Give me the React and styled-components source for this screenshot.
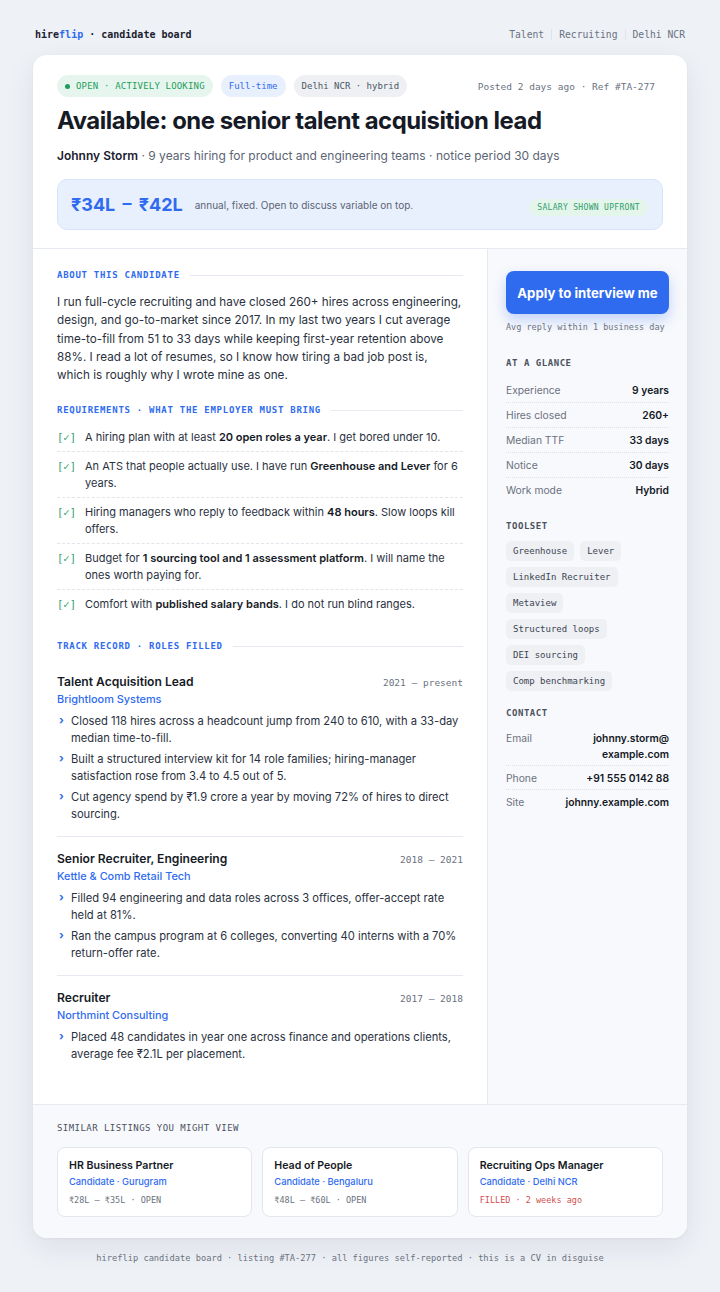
import React from 'react';
import styled, { createGlobalStyle } from 'styled-components';

const sans = `Inter, "Noto Sans", "Liberation Sans", sans-serif`;
const mono = `"DejaVu Sans Mono", "Liberation Mono", monospace`;

const GlobalStyle = createGlobalStyle`
  html, body {
    margin: 0;
    padding: 0;
    background: #eef1f6;
  }
  body {
    font-family: ${sans};
    color: #1b2130;
    -webkit-font-smoothing: antialiased;
  }
  * { box-sizing: border-box; }
`;

const Page = styled.div`
  padding: 24px 33px 24px;
  min-height: 1292px;
`;

const TopBar = styled.header`
  display: flex;
  justify-content: space-between;
  align-items: center;
  height: 20px;
  margin-bottom: 11px;
  padding: 0 2px;
  font-family: ${mono};
  font-size: 10px;
`;

const Brand = styled.div`
  color: #1b2130;
  font-weight: 700;
  span { color: #2f6bef; }
`;

const Crumbs = styled.nav`
  display: flex;
  align-items: center;
  font-size: 9.7px;
  color: #6b7280;
  span + span {
    border-left: 1px solid #e0e3ea;
    margin-left: 7px;
    padding-left: 7px;
  }
`;

const Card = styled.main`
  background: #ffffff;
  border-radius: 14px;
  box-shadow: 0 10px 30px rgba(30, 41, 70, 0.08), 0 1px 3px rgba(30, 41, 70, 0.05);
  overflow: hidden;
`;

const Head = styled.section`
  padding: 20px 24px 18px;
  border-bottom: 1px solid #e6e9ef;
`;

const ChipRow = styled.div`
  display: flex;
  align-items: center;
  gap: 8px;
`;

const Chip = styled.span`
  display: inline-flex;
  align-items: center;
  gap: 6px;
  height: 22px;
  padding: 0 8px;
  border-radius: 11px;
  font-family: ${mono};
  font-size: 9px;
  letter-spacing: ${(p) => (p.$caps ? '0.02em' : '0')};
  color: ${(p) => p.$fg};
  background: ${(p) => p.$bg};
`;

const Dot = styled.i`
  width: 5px;
  height: 5px;
  border-radius: 50%;
  background: #1f9d5c;
`;

const Posted = styled.span`
  margin-left: auto;
  margin-right: 8px;
  font-family: ${mono};
  font-size: 9.5px;
  color: #6b7280;
`;

const Title = styled.h1`
  margin: 10px 0 0;
  font-size: 23.9px;
  line-height: 28px;
  font-weight: 700;
  letter-spacing: -0.02em;
  color: #151a26;
`;

const Sub = styled.p`
  margin: 12px 0 0;
  font-size: 12px;
  line-height: 18px;
  color: #5b6474;
  b { color: #1b2130; font-weight: 600; }
`;

const Salary = styled.div`
  display: flex;
  align-items: center;
  gap: 12px;
  margin-top: 14px;
  height: 51px;
  padding: 0 14px 0 13px;
  border-radius: 10px;
  background: #e9f0fd;
  border: 1px solid #d6e3fb;
`;

const Amount = styled.strong`
  font-size: 18px;
  font-weight: 700;
  color: #2f6bef;
  word-spacing: 3px;
`;

const SalaryNote = styled.span`
  font-size: 10px;
  color: #5b6474;
`;

const Upfront = styled.span`
  margin-left: auto;
  margin-top: 6px;
  padding: 4px 8px;
  border-radius: 8px;
  background: #e4f5ec;
  font-family: ${mono};
  font-size: 8px;
  letter-spacing: 0.04em;
  color: #2f9e6a;
`;

const Columns = styled.div`
  display: grid;
  grid-template-columns: 454px 200px;
`;

const MainCol = styled.div`
  padding: 20px 24px 28px;
`;

const SectionLabel = styled.h2`
  display: flex;
  align-items: center;
  gap: 10px;
  margin: ${(p) => p.$top || 0}px 0 0;
  font-family: ${mono};
  font-size: 9px;
  line-height: 12px;
  font-weight: 700;
  letter-spacing: 0.08em;
  color: #2f6bef;
  &::after {
    content: '';
    flex: 1;
    height: 1px;
    background: #e6e9ef;
  }
`;

const About = styled.p`
  margin: 12px 0 0;
  font-size: 11.7px;
  line-height: 18.3px;
  color: #2a3140;
`;

const ReqList = styled.ul`
  list-style: none;
  margin: 7px 0 0;
  padding: 0;
`;

const Req = styled.li`
  display: flex;
  gap: 9px;
  padding: 6px 0 5px;
  font-size: 11px;
  line-height: 17px;
  color: #2a3140;
  & + & { border-top: 1px dashed #e2e5eb; }
  strong { font-weight: 600; color: #151a26; }
`;

const Check = styled.span`
  flex: none;
  font-family: ${mono};
  font-size: 10.5px;
  color: #2f9e6a;
`;

const Job = styled.article`
  padding: 13px 0;
  & + & { border-top: 1px solid #e6e9ef; }
  &:first-of-type { padding-top: 21px; }
`;

const JobHead = styled.div`
  display: flex;
  justify-content: space-between;
  align-items: baseline;
`;

const JobTitle = styled.h3`
  margin: 0;
  font-size: 12.1px;
  line-height: 18px;
  font-weight: 600;
  color: #151a26;
`;

const Dates = styled.span`
  font-family: ${mono};
  font-size: 9.5px;
  color: #6b7280;
`;

const Company = styled.div`
  font-size: 10.9px;
  line-height: 16px;
  font-weight: 500;
  color: #2f6bef;
`;

const Bullets = styled.ul`
  list-style: none;
  margin: 6px 0 0;
  padding: 0;
  display: flex;
  flex-direction: column;
  gap: 4px;
`;

const Bullet = styled.li`
  position: relative;
  padding-left: 14px;
  font-size: 11.2px;
  line-height: 17px;
  color: #2a3140;
  &::before {
    content: '›';
    position: absolute;
    left: 2px;
    top: -1px;
    font-weight: 700;
    color: #2f6bef;
  }
`;

const Side = styled.aside`
  padding: 22px 18px;
  background: #f8f9fc;
  border-left: 1px solid #e6e9ef;
`;

const ApplyButton = styled.button`
  width: 100%;
  height: 43px;
  border: 0;
  border-radius: 8px;
  background: #2f6bef;
  color: #fff;
  font-family: ${sans};
  font-size: 13.2px;
  font-weight: 700;
  box-shadow: 0 6px 14px rgba(47, 107, 239, 0.28);
  cursor: pointer;
`;

const ReplyNote = styled.div`
  margin-top: 7px;
  font-family: ${mono};
  font-size: 8.5px;
  line-height: 12px;
  white-space: nowrap;
  color: #6b7280;
`;

const SideLabel = styled.h4`
  margin: ${(p) => p.$top}px 0 0;
  font-family: ${mono};
  font-size: 9px;
  line-height: 12px;
  font-weight: 700;
  letter-spacing: 0.06em;
  color: #4b5260;
`;

const Facts = styled.dl`
  margin: ${(p) => (p.$tight ? 7 : 9)}px 0 0;
`;

const Fact = styled.div`
  display: flex;
  justify-content: space-between;
  align-items: flex-start;
  padding: ${(p) => (p.$tall ? '4px 0 3px' : '5px 0 4px')};
  font-size: 10.3px;
  line-height: ${(p) => (p.$tall ? '16px' : '15px')};
  & + & { border-top: 1px dotted #dfe2e8; }
  dt { color: #6b7280; }
  dd { margin: 0; font-weight: 600; color: #151a26; text-align: right; }
`;

const Tags = styled.div`
  display: flex;
  flex-wrap: wrap;
  gap: 6px;
  margin-top: 9px;
  padding-right: 30px;
`;

const Tag = styled.span`
  height: 20px;
  line-height: 20px;
  padding: 0 7px;
  border-radius: 5px;
  background: #eef0f4;
  font-family: ${mono};
  font-size: 9px;
  color: #3d4452;
`;

const Similar = styled.section`
  padding: 17px 24px 21px;
  background: #f8f9fc;
  border-top: 1px solid #e6e9ef;
`;

const SimilarLabel = styled.h4`
  margin: 0;
  font-family: ${mono};
  font-size: 9px;
  line-height: 12px;
  font-weight: 400;
  letter-spacing: 0.05em;
  color: #4b5260;
`;

const ListingGrid = styled.div`
  display: grid;
  grid-template-columns: repeat(3, 1fr);
  gap: 10px;
  margin-top: 13px;
`;

const Listing = styled.div`
  height: 70px;
  padding: 10px 11px;
  border-radius: 8px;
  background: #fff;
  border: 1px solid #e3e6ec;
`;

const ListingTitle = styled.div`
  font-size: 10.6px;
  line-height: 16px;
  font-weight: 600;
  color: #151a26;
`;

const ListingSub = styled.div`
  margin-top: 1px;
  font-size: 9.3px;
  line-height: 14px;
  font-weight: 500;
  color: #2f6bef;
`;

const ListingMeta = styled.div`
  margin-top: 5px;
  font-family: ${mono};
  font-size: 8.5px;
  line-height: 12px;
  color: ${(p) => (p.$filled ? '#d0504f' : '#6b7280')};
`;

const FootNote = styled.footer`
  margin-top: 14px;
  padding-right: 20px;
  text-align: center;
  font-family: ${mono};
  font-size: 8.7px;
  line-height: 12px;
  color: #6b7280;
`;

const requirements = [
  <>A hiring plan with at least <strong>20 open roles a year</strong>. I get bored under 10.</>,
  <>An ATS that people actually use. I have run <strong>Greenhouse and Lever</strong> for 6 years.</>,
  <>Hiring managers who reply to feedback within <strong>48 hours</strong>. Slow loops kill offers.</>,
  <>Budget for <strong>1 sourcing tool and 1 assessment platform</strong>. I will name the ones worth paying for.</>,
  <>Comfort with <strong>published salary bands</strong>. I do not run blind ranges.</>,
];

const jobs = [
  {
    title: 'Talent Acquisition Lead',
    company: 'Brightloom Systems',
    dates: '2021 – present',
    points: [
      'Closed 118 hires across a headcount jump from 240 to 610, with a 33-day median time-to-fill.',
      'Built a structured interview kit for 14 role families; hiring-manager satisfaction rose from 3.4 to 4.5 out of 5.',
      'Cut agency spend by ₹1.9 crore a year by moving 72% of hires to direct sourcing.',
    ],
  },
  {
    title: 'Senior Recruiter, Engineering',
    company: 'Kettle & Comb Retail Tech',
    dates: '2018 – 2021',
    points: [
      'Filled 94 engineering and data roles across 3 offices, offer-accept rate held at 81%.',
      'Ran the campus program at 6 colleges, converting 40 interns with a 70% return-offer rate.',
    ],
  },
  {
    title: 'Recruiter',
    company: 'Northmint Consulting',
    dates: '2017 – 2018',
    points: [
      'Placed 48 candidates in year one across finance and operations clients, average fee ₹2.1L per placement.',
    ],
  },
];

const glance = [
  ['Experience', '9 years'],
  ['Hires closed', '260+'],
  ['Median TTF', '33 days'],
  ['Notice', '30 days'],
  ['Work mode', 'Hybrid'],
];

const tools = ['Greenhouse', 'Lever', 'LinkedIn Recruiter', 'Metaview', 'Structured loops', 'DEI sourcing', 'Comp benchmarking'];

const listings = [
  { title: 'HR Business Partner', sub: 'Candidate · Gurugram', meta: '₹28L – ₹35L · OPEN' },
  { title: 'Head of People', sub: 'Candidate · Bengaluru', meta: '₹48L – ₹60L · OPEN' },
  { title: 'Recruiting Ops Manager', sub: 'Candidate · Delhi NCR', meta: 'FILLED · 2 weeks ago', filled: true },
];

export default function App() {
  return (
    <Page>
      <GlobalStyle />
      <TopBar>
        <Brand>hire<span>flip</span> · candidate board</Brand>
        <Crumbs>
          <span>Talent</span>
          <span>Recruiting</span>
          <span>Delhi NCR</span>
        </Crumbs>
      </TopBar>

      <Card>
        <Head>
          <ChipRow>
            <Chip $caps $fg="#1f9d5c" $bg="#e6f6ee"><Dot />OPEN · ACTIVELY LOOKING</Chip>
            <Chip $fg="#2f6bef" $bg="#e8effd">Full-time</Chip>
            <Chip $fg="#4b5563" $bg="#eef0f4">Delhi NCR · hybrid</Chip>
            <Posted>Posted 2 days ago · Ref #TA-277</Posted>
          </ChipRow>
          <Title>Available: one senior talent acquisition lead</Title>
          <Sub><b>Johnny Storm</b> · 9 years hiring for product and engineering teams · notice period 30 days</Sub>
          <Salary>
            <Amount>₹34L – ₹42L</Amount>
            <SalaryNote>annual, fixed. Open to discuss variable on top.</SalaryNote>
            <Upfront>SALARY SHOWN UPFRONT</Upfront>
          </Salary>
        </Head>

        <Columns>
          <MainCol>
            <SectionLabel>ABOUT THIS CANDIDATE</SectionLabel>
            <About>
              I run full-cycle recruiting and have closed 260+ hires across engineering, design, and go-to-market since 2017. In my last two years I cut average time-to-fill from 51 to 33 days while keeping first-year retention above 88%. I read a lot of resumes, so I know how tiring a bad job post is, which is roughly why I wrote mine as one.
            </About>

            <SectionLabel $top={20}>REQUIREMENTS · WHAT THE EMPLOYER MUST BRING</SectionLabel>
            <ReqList>
              {requirements.map((r, i) => (
                <Req key={i}>
                  <Check>[✓]</Check>
                  <span>{r}</span>
                </Req>
              ))}
            </ReqList>

            <SectionLabel $top={22}>TRACK RECORD · ROLES FILLED</SectionLabel>
            <div>
              {jobs.map((job) => (
                <Job key={job.title}>
                  <JobHead>
                    <JobTitle>{job.title}</JobTitle>
                    <Dates>{job.dates}</Dates>
                  </JobHead>
                  <Company>{job.company}</Company>
                  <Bullets>
                    {job.points.map((p) => (
                      <Bullet key={p}>{p}</Bullet>
                    ))}
                  </Bullets>
                </Job>
              ))}
            </div>
          </MainCol>

          <Side>
            <ApplyButton>Apply to interview me</ApplyButton>
            <ReplyNote>Avg reply within 1 business day</ReplyNote>

            <SideLabel $top={24}>AT A GLANCE</SideLabel>
            <Facts>
              {glance.map(([k, v]) => (
                <Fact key={k}>
                  <dt>{k}</dt>
                  <dd>{v}</dd>
                </Fact>
              ))}
            </Facts>

            <SideLabel $top={18}>TOOLSET</SideLabel>
            <Tags>
              {tools.map((t) => (
                <Tag key={t}>{t}</Tag>
              ))}
            </Tags>

            <SideLabel $top={16}>CONTACT</SideLabel>
            <Facts $tight>
              <Fact $tall>
                <dt>Email</dt>
                <dd>johnny.storm@<br />example.com</dd>
              </Fact>
              <Fact $tall>
                <dt>Phone</dt>
                <dd>+91 555 0142 88</dd>
              </Fact>
              <Fact $tall>
                <dt>Site</dt>
                <dd>johnny.example.com</dd>
              </Fact>
            </Facts>
          </Side>
        </Columns>

        <Similar>
          <SimilarLabel>SIMILAR LISTINGS YOU MIGHT VIEW</SimilarLabel>
          <ListingGrid>
            {listings.map((l) => (
              <Listing key={l.title}>
                <ListingTitle>{l.title}</ListingTitle>
                <ListingSub>{l.sub}</ListingSub>
                <ListingMeta $filled={l.filled}>{l.meta}</ListingMeta>
              </Listing>
            ))}
          </ListingGrid>
        </Similar>
      </Card>

      <FootNote>hireflip candidate board · listing #TA-277 · all figures self-reported · this is a CV in disguise</FootNote>
    </Page>
  );
}
